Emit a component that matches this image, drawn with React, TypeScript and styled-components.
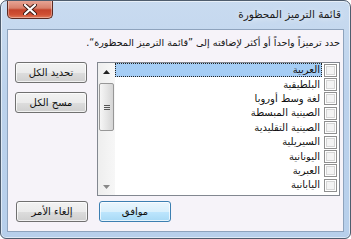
import styled, { createGlobalStyle } from "styled-components";

const GlobalStyle = createGlobalStyle`
html, body {
  margin: 0;
  padding: 0;
  background: #ffffff;
}
* { box-sizing: border-box; }
`;

const Window = styled.div`
width: 351px;
height: 239px;
border: 1px solid #4f5d6e;
border-radius: 7px 7px 6px 6px;
background: linear-gradient(180deg, #c9dbf0 0%, #bcd2ec 40%, #b7cfeb 100%);
box-shadow: inset 0 0 0 1px rgba(255,255,255,0.55);
display: flex;
flex-direction: column;
font-family: "DejaVu Sans", sans-serif;
overflow: hidden;
`;

const TitleBar = styled.div`
height: 28px;
display: flex;
justify-content: space-between;
align-items: flex-start;
padding: 0 9px 0 6px;
`;

const CloseButton = styled.div`
width: 46px;
height: 19px;
margin-top: -1px;
border: 1px solid #5a2a22;
border-top: none;
border-radius: 0 0 5px 5px;
background: linear-gradient(180deg, #e9a99a 0%, #d8806b 45%, #c4432b 55%, #cf4f33 80%, #e07a5a 100%);
box-shadow: inset 0 0 0 1px rgba(255,255,255,0.35);
display: flex;
align-items: center;
justify-content: center;
`;

const Title = styled.div`
direction: rtl;
margin-top: 7px;
font-size: 10.5px;
color: #1a1a1a;
text-shadow: 0 0 6px rgba(255,255,255,0.9);
`;

const Client = styled.div`
direction: rtl;
flex: 1;
margin: 0 6px 6px 6px;
border: 1px solid #8ea3bd;
background: #f6f3f9;
padding: 5px 3px 9px 7px;
display: flex;
flex-direction: column;
`;

const Prompt = styled.div`
font-size: 9.6px;
color: #111;
height: 27px;
line-height: 16px;
white-space: nowrap;
`;

const MainRow = styled.div`
display: flex;
gap: 10px;
height: 134px;
`;

const ListBox = styled.div`
width: 243px;
height: 134px;
border: 1px solid #828790;
background: #ffffff;
display: flex;
`;

const Items = styled.div`
flex: 1;
display: flex;
flex-direction: column;
`;

const Item = styled.div`
height: 14.4px;
display: flex;
align-items: center;
padding-right: 2px;
font-size: 10px;
color: #111;
`;

const CheckBox = styled.span`
width: 13px;
height: 13px;
flex: none;
border: 1px solid #8f8f8f;
background: #f4f4f4;
box-shadow: inset 0 0 0 1px #ffffff, inset 0 0 0 2px #d6d6d6;
`;

const Label = styled.span<{ $selected?: boolean }>`
flex: 1;
height: 14px;
line-height: 13px;
margin-right: 2px;
padding-right: 2px;
background: ${(p) => (p.$selected ? "#a5cdf5" : "transparent")};
outline: ${(p) => (p.$selected ? "1px dotted #222" : "none")};
outline-offset: -1px;
white-space: nowrap;
`;

const ScrollBar = styled.div`
width: 17px;
flex: none;
background: linear-gradient(90deg, #eeeeee, #f7f7f7);
display: flex;
flex-direction: column;
align-items: center;
`;

const Arrow = styled.div`
height: 17px;
width: 17px;
display: flex;
align-items: center;
justify-content: center;
`;

const Thumb = styled.div`
width: 15px;
height: 48px;
margin-top: 3px;
border: 1px solid #979797;
border-radius: 2px;
background: linear-gradient(90deg, #f6f6f6 0%, #e6e6e6 50%, #d5d5d5 100%);
display: flex;
flex-direction: column;
align-items: center;
justify-content: center;
gap: 1px;
`;

const Grip = styled.span`
width: 6px;
height: 1px;
background: #555;
`;

const Track = styled.div`
flex: 1;
`;

const ButtonColumn = styled.div`
display: flex;
flex-direction: column;
gap: 9px;
`;

const Button = styled.div<{ $default?: boolean }>`
width: 72px;
height: 21px;
border: 1px solid ${(p) => (p.$default ? "#3c7fb1" : "#707070")};
border-radius: 3px;
background: ${(p) =>
  p.$default
    ? "linear-gradient(180deg, #eaf6fd 0%, #d9f0fc 50%, #bee6fd 51%, #a7d9f5 100%)"
    : "linear-gradient(180deg, #f2f2f2 0%, #ebebeb 50%, #dddddd 51%, #cfcfcf 100%)"};
box-shadow: inset 0 0 0 1px rgba(255,255,255,0.7);
display: flex;
align-items: center;
justify-content: center;
font-size: 10px;
color: #111;
`;

const BottomRow = styled.div`
margin-top: auto;
display: flex;
gap: 11px;
padding-right: 169px;
`;

const encodings = [
  "العربية",
  "البلطيقية",
  "لغة وسط أوروبا",
  "الصينية المبسطة",
  "الصينية التقليدية",
  "السيريلية",
  "اليونانية",
  "العبرية",
  "اليابانية",
];

function App() {
  return (
    <>
      <GlobalStyle />
      <Window>
        <TitleBar>
          <CloseButton>
            <svg width="14" height="11" viewBox="0 0 14 11">
              <path d="M2 1 L12 10 M12 1 L2 10" stroke="#3a1a14" strokeWidth="4" strokeLinecap="round" />
              <path d="M2 1 L12 10 M12 1 L2 10" stroke="#ffffff" strokeWidth="2.2" strokeLinecap="round" />
            </svg>
          </CloseButton>
          <Title>قائمة الترميز المحظورة</Title>
        </TitleBar>
        <Client>
          <Prompt>حدد ترميزاً واحداً أو أكثر لإضافته إلى ”قائمة الترميز المحظورة“.</Prompt>
          <MainRow>
            <ListBox>
              <Items>
                {encodings.map((name, i) => (
                  <Item key={name}>
                    <CheckBox />
                    <Label $selected={i === 0}>{name}</Label>
                  </Item>
                ))}
              </Items>
              <ScrollBar>
                <Arrow>
                  <svg width="7" height="4" viewBox="0 0 7 4">
                    <path d="M0 4 L3.5 0 L7 4 Z" fill="#222" />
                  </svg>
                </Arrow>
                <Thumb>
                  <Grip />
                  <Grip />
                  <Grip />
                </Thumb>
                <Track />
                <Arrow>
                  <svg width="7" height="4" viewBox="0 0 7 4">
                    <path d="M0 0 L7 0 L3.5 4 Z" fill="#888" />
                  </svg>
                </Arrow>
              </ScrollBar>
            </ListBox>
            <ButtonColumn>
              <Button>تحديد الكل</Button>
              <Button>مسح الكل</Button>
            </ButtonColumn>
          </MainRow>
          <BottomRow>
            <Button $default>موافق</Button>
            <Button>إلغاء الأمر</Button>
          </BottomRow>
        </Client>
      </Window>
    </>
  );
}

export default App;
